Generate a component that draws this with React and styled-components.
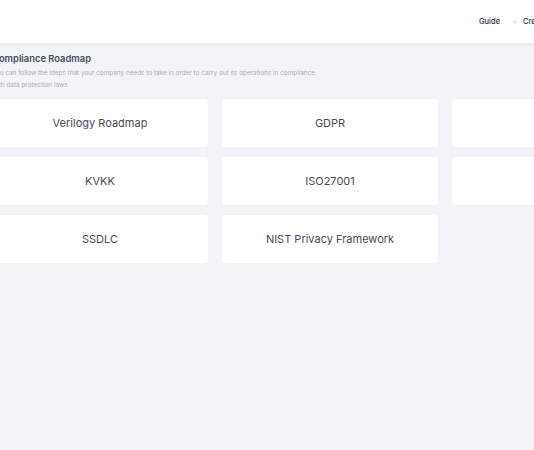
import React from "react";
import { createGlobalStyle, styled } from "styled-components";
import { Plus } from "lucide-react";

const GlobalStyle = createGlobalStyle`
  html, body {
    margin: 0;
    padding: 0;
    background: #f3f4f8;
    overflow: hidden;
  }
  body {
    font-family: Inter, "Noto Sans", sans-serif;
  }
`;

const Page = styled.div`
  width: 640px;
  height: 450px;
  margin-left: -8px;
  background: #f3f4f8;
  display: flex;
  flex-direction: column;
`;

const Header = styled.header`
  height: 43px;
  background: #fff;
  box-shadow: 0 1px 3px rgba(30, 40, 70, 0.06);
  display: flex;
  align-items: center;
  padding-left: 487px;
`;

const Nav = styled.nav`
  display: flex;
  align-items: center;
  gap: 11px;
`;

const NavLink = styled.span`
  display: flex;
  align-items: center;
  gap: 4px;
  font-size: 7.5px;
  font-weight: 500;
  color: #2b2f3a;
  white-space: nowrap;
`;

const Main = styled.main`
  padding-top: 9px;
`;

const Title = styled.h1`
  margin: 0;
  font-size: 9.4px;
  font-weight: 600;
  color: #474b5c;
  line-height: 14px;
`;

const Subtitle = styled.p`
  margin: 1px 0 0;
  max-width: 330px;
  font-size: 6.4px;
  line-height: 12px;
  color: #aaadb8;
`;

const Grid = styled.div`
  margin-top: 8px;
  display: grid;
  grid-template-columns: repeat(3, 216px);
  column-gap: 14px;
  row-gap: 10px;
`;

const Card = styled.div`
  height: 48px;
  background: #fff;
  border-radius: 4px;
  display: flex;
  align-items: center;
  justify-content: center;
  font-size: 11px;
  color: #484c58;
`;

const cards = [
  "Verilogy Roadmap",
  "GDPR",
  "",
  "KVKK",
  "ISO27001",
  "",
  "SSDLC",
  "NIST Privacy Framework",
];

export default function App() {
  return (
    <>
      <GlobalStyle />
      <Page>
        <Header>
          <Nav>
            <NavLink>Guide</NavLink>
            <NavLink>
              <Plus size={8} color="#c8cad2" strokeWidth={1.5} />
              Create Roadmap
            </NavLink>
          </Nav>
        </Header>
        <Main>
          <Title>Compliance Roadmap</Title>
          <Subtitle>
            You can follow the steps that your company needs to take in order to
            carry out its operations in compliance with data protection laws
          </Subtitle>
          <Grid>
            {cards.map((c, i) => (
              <Card key={i}>{c}</Card>
            ))}
          </Grid>
        </Main>
      </Page>
    </>
  );
}
